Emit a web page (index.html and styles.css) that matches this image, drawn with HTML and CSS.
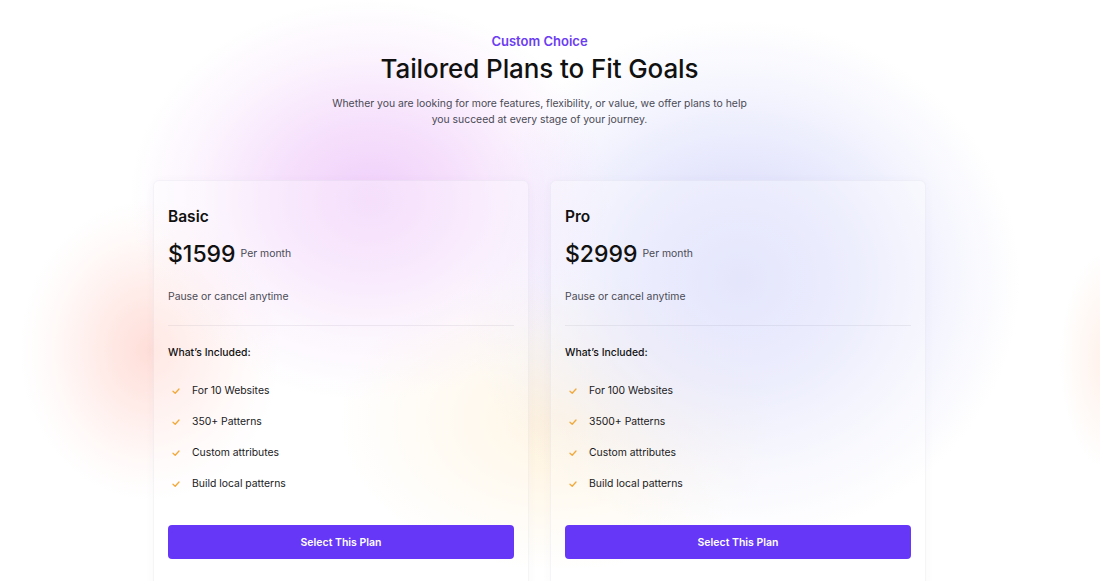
FILE: index.html
```html
<!DOCTYPE html>
<html lang="en">
<head>
<meta charset="utf-8">
<title>Pricing</title>
<link rel="stylesheet" href="styles.css">
</head>
<body>
<main class="page">
  <header class="intro">
    <p class="eyebrow">Custom Choice</p>
    <h1 class="title">Tailored Plans to Fit Goals</h1>
    <p class="lead">Whether you are looking for more features, flexibility, or value, we offer plans to help you succeed at every stage of your journey.</p>
  </header>
  <section class="plans">
    <article class="card">
      <h2 class="plan-name">Basic</h2>
      <div class="price"><span class="amount">$1599</span><span class="period">Per month</span></div>
      <p class="note">Pause or cancel anytime</p>
      <hr class="divider">
      <h3 class="incl">What’s Included:</h3>
      <ul class="features">
        <li><svg class="check" viewBox="0 0 12 12"><path d="M3 6.3 5.2 8.3 9 4"/></svg>For 10 Websites</li>
        <li><svg class="check" viewBox="0 0 12 12"><path d="M3 6.3 5.2 8.3 9 4"/></svg>350+ Patterns</li>
        <li><svg class="check" viewBox="0 0 12 12"><path d="M3 6.3 5.2 8.3 9 4"/></svg>Custom attributes</li>
        <li><svg class="check" viewBox="0 0 12 12"><path d="M3 6.3 5.2 8.3 9 4"/></svg>Build local patterns</li>
      </ul>
      <button class="btn">Select This Plan</button>
    </article>
    <article class="card">
      <h2 class="plan-name">Pro</h2>
      <div class="price"><span class="amount">$2999</span><span class="period">Per month</span></div>
      <p class="note">Pause or cancel anytime</p>
      <hr class="divider">
      <h3 class="incl">What’s Included:</h3>
      <ul class="features">
        <li><svg class="check" viewBox="0 0 12 12"><path d="M3 6.3 5.2 8.3 9 4"/></svg>For 100 Websites</li>
        <li><svg class="check" viewBox="0 0 12 12"><path d="M3 6.3 5.2 8.3 9 4"/></svg>3500+ Patterns</li>
        <li><svg class="check" viewBox="0 0 12 12"><path d="M3 6.3 5.2 8.3 9 4"/></svg>Custom attributes</li>
        <li><svg class="check" viewBox="0 0 12 12"><path d="M3 6.3 5.2 8.3 9 4"/></svg>Build local patterns</li>
      </ul>
      <button class="btn">Select This Plan</button>
    </article>
  </section>
</main>
</body>
</html>
```
FILE: styles.css
```css
* { box-sizing: border-box; }
html, body { height: 100%; }
body {
  margin: 0;
  font-family: Inter, "Noto Sans", sans-serif;
  color: #111;
  overflow: hidden;
  background-color: #fff;
  background-image:
    radial-gradient(ellipse 240px 200px at 370px 200px, rgba(240, 205, 250, 0.95) 0, rgba(240, 205, 250, 0.65) 35%, rgba(240, 205, 250, 0.25) 70%, rgba(240, 205, 250, 0) 100%),
    radial-gradient(ellipse 280px 260px at 740px 280px, rgba(216, 218, 251, 1) 0, rgba(216, 218, 251, 0.7) 40%, rgba(216, 218, 251, 0.25) 75%, rgba(216, 218, 251, 0) 100%),
    radial-gradient(ellipse 130px 150px at 150px 350px, rgba(255, 208, 200, 0.7) 0, rgba(255, 208, 200, 0.4) 40%, rgba(255, 208, 200, 0.12) 75%, rgba(255, 208, 200, 0) 100%),
    radial-gradient(ellipse 220px 150px at 560px 420px, rgba(255, 238, 208, 0.8) 0, rgba(255, 238, 208, 0.45) 45%, rgba(255, 238, 208, 0) 100%),
    radial-gradient(ellipse 50px 110px at 1110px 360px, rgba(255, 225, 210, 0.5) 0, rgba(255, 225, 210, 0) 100%);
}
.page {
  width: 1079px;
  padding-top: 32px;
}
.intro {
  text-align: center;
}
.eyebrow {
  margin: 0;
  font-size: 13px;
  line-height: 18px;
  font-weight: 600;
  color: #6b3cf2;
}
.title {
  margin: 2px 0 0;
  font-size: 26px;
  line-height: 34px;
  font-weight: 500;
  letter-spacing: -0.1px;
  color: #111;
}
.lead {
  margin: 10px auto 0;
  width: 420px;
  font-size: 10.4px;
  line-height: 16px;
  color: #4a4a55;
}
.plans {
  margin: 52px auto 0;
  width: 773px;
  display: grid;
  grid-template-columns: 376px 376px;
  gap: 21px;
}
.card {
  background: rgba(255, 255, 255, 0.32);
  border: 1px solid rgba(120, 110, 160, 0.07);
  border-radius: 6px;
  padding: 26px 14px 40px;
  box-shadow: 0 1px 8px rgba(80, 70, 140, 0.04);
}
.plan-name {
  margin: 0;
  font-size: 15.5px;
  line-height: 20px;
  font-weight: 600;
  color: #111;
}
.price {
  margin-top: 12px;
  display: flex;
  align-items: center;
  gap: 5px;
}
.amount {
  font-size: 23px;
  line-height: 30px;
  font-weight: 500;
  color: #111;
}
.period {
  font-size: 10.4px;
  line-height: 16px;
  color: #4a4a55;
}
.note {
  margin: 20px 0 0;
  font-size: 10.4px;
  line-height: 16px;
  color: #4a4a55;
}
.divider {
  margin: 20px 0 0;
  border: 0;
  border-top: 1px solid rgba(60, 60, 90, 0.08);
}
.incl {
  margin: 19px 0 0;
  font-size: 10.4px;
  line-height: 16px;
  font-weight: 500;
  color: #111;
}
.features {
  list-style: none;
  margin: 22px 0 0;
  padding: 0 0 0 2px;
  display: flex;
  flex-direction: column;
  gap: 15px;
}
.features li {
  display: flex;
  align-items: center;
  gap: 10px;
  font-size: 10.4px;
  line-height: 16px;
  color: #1a1a22;
}
.check {
  width: 12px;
  height: 12px;
  fill: none;
  stroke: #f2a93b;
  stroke-width: 1.3;
  stroke-linecap: round;
  stroke-linejoin: round;
}
.btn {
  display: block;
  width: 100%;
  margin-top: 33px;
  height: 34px;
  border: 0;
  border-radius: 4px;
  background: #6637f7;
  color: #fff;
  font-family: inherit;
  font-size: 10.5px;
  font-weight: 600;
}
```
